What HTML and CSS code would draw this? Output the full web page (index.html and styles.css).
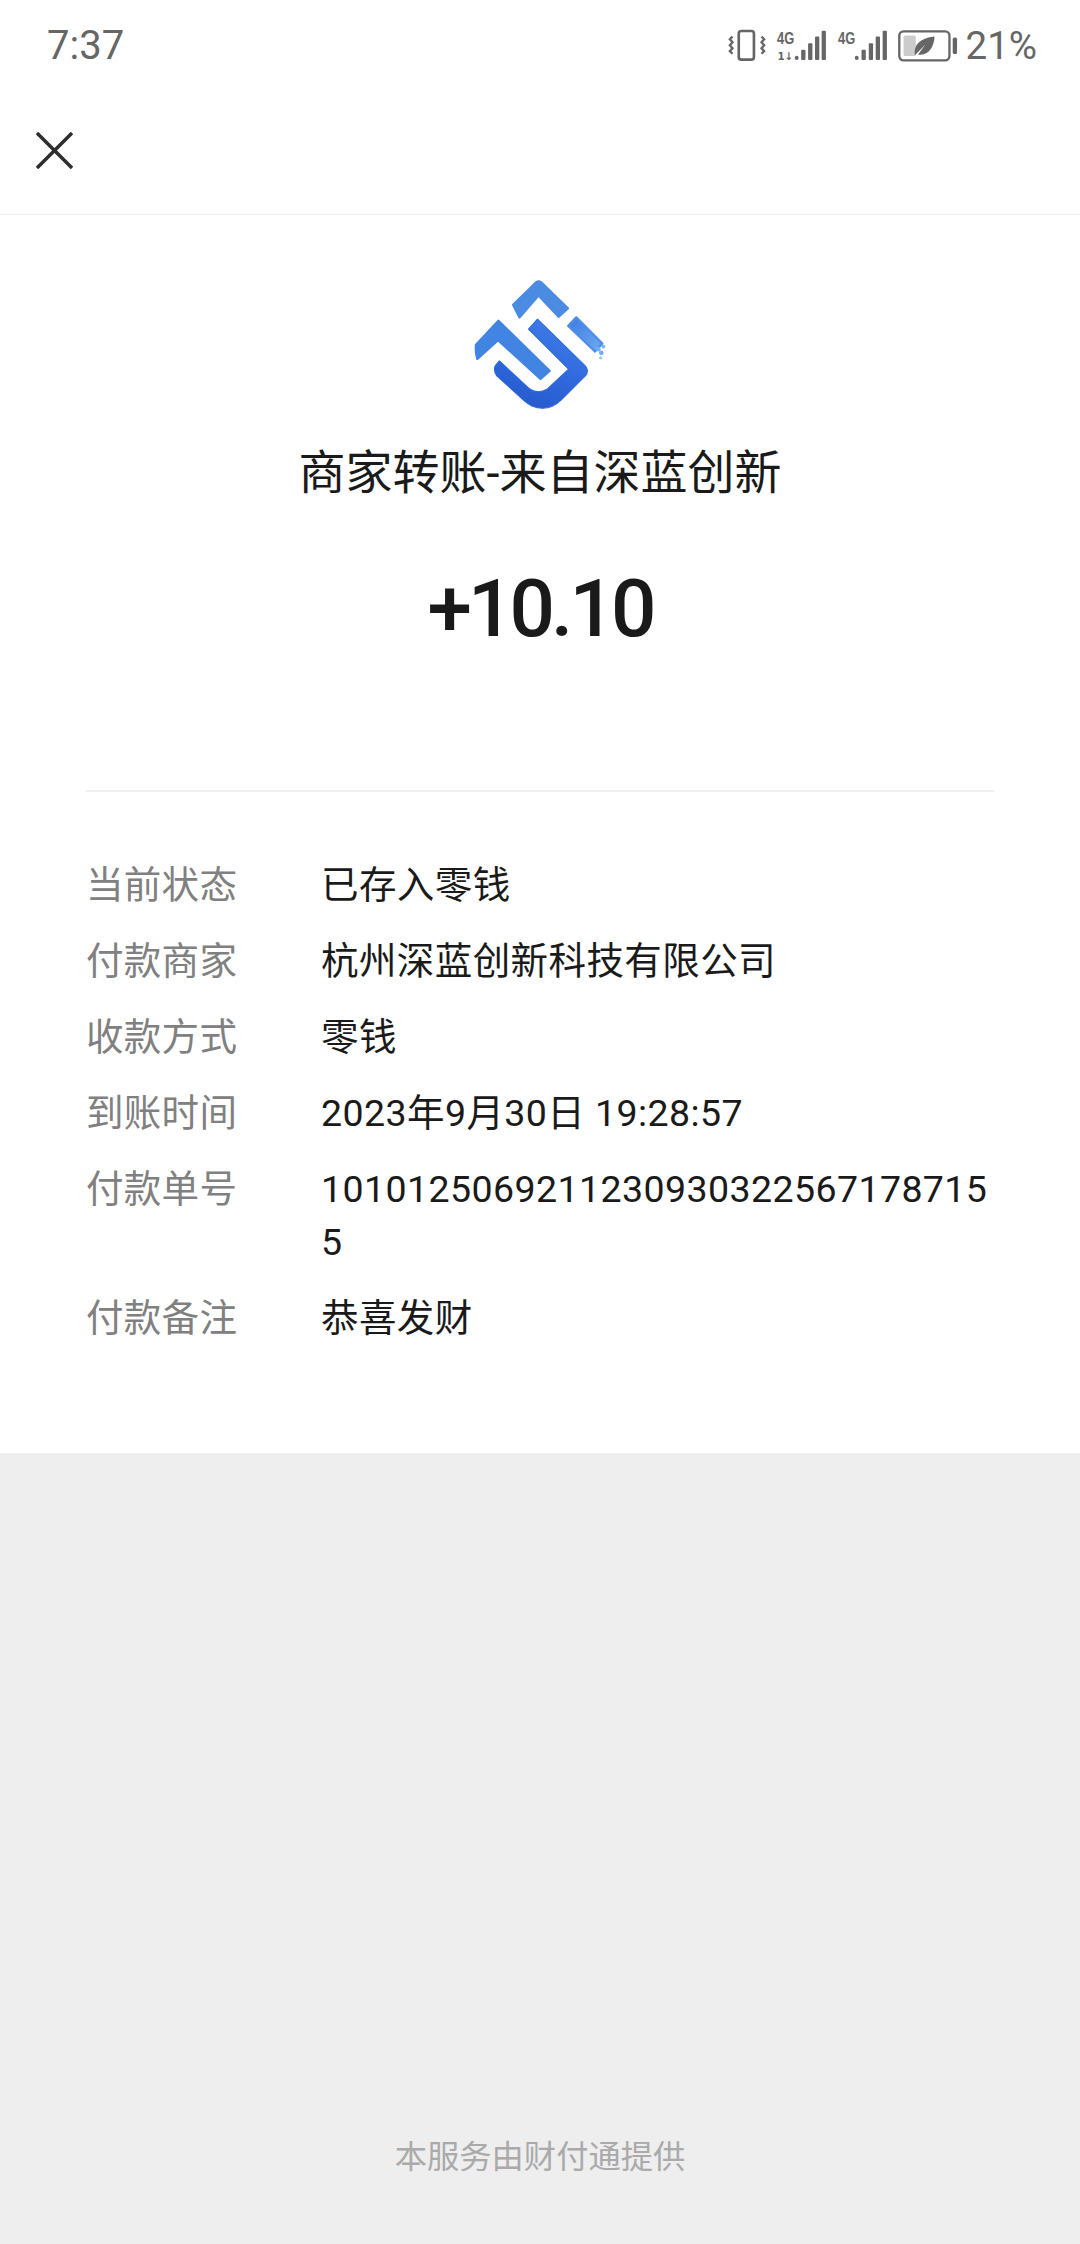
FILE: index.html
```html
<!DOCTYPE html>
<html lang="zh-CN">
<head>
    <meta charset="UTF-8">
    <title>商家转账</title>
    <link rel="stylesheet" href="styles.css">
</head>
<body>
<div class="status-bar">
    <span class="clock">7:37</span>
    <div class="status-icons">
        <svg class="ic-vibrate" viewBox="85 75 115 100" width="39" height="33">
            <rect x="116" y="81" width="46" height="87" rx="8" fill="none" stroke="#666" stroke-width="8"/>
            <path d="M97 98l-8 8 8 9-8 9 8 9-8 9 8 8M185 98l8 8-8 9 8 9-8 9 8 9-8 8" fill="none" stroke="#666" stroke-width="7"/>
        </svg>
        <svg class="ic-signal" viewBox="228 75 155 100" width="52" height="33">
            <text x="230" y="119" class="net" textLength="52" lengthAdjust="spacingAndGlyphs">4G</text>
            <text x="231" y="170" class="net-sub" textLength="48" lengthAdjust="spacingAndGlyphs">1↓</text>
            <rect x="284" y="156" width="11" height="13" rx="5" fill="#666"/>
            <rect x="303" y="138" width="13" height="31" rx="3" fill="#666"/>
            <rect x="324" y="118" width="13" height="51" rx="3" fill="#666"/>
            <rect x="345" y="98" width="13" height="71" rx="3" fill="#666"/>
            <rect x="365" y="80" width="13" height="89" rx="3" fill="#666"/>
        </svg>
        <svg class="ic-signal2" viewBox="412 75 155 100" width="52" height="33">
            <text x="414" y="119" class="net" textLength="52" lengthAdjust="spacingAndGlyphs">4G</text>
            <rect x="465" y="156" width="11" height="13" rx="5" fill="#666"/>
            <rect x="485" y="138" width="13" height="31" rx="3" fill="#666"/>
            <rect x="507" y="118" width="13" height="51" rx="3" fill="#666"/>
            <rect x="528" y="98" width="13" height="71" rx="3" fill="#666"/>
            <rect x="549" y="80" width="13" height="89" rx="3" fill="#666"/>
        </svg>
        <svg class="ic-battery" viewBox="600 80 180 100" width="60" height="33">
            <rect x="603" y="87" width="152" height="88" rx="13" fill="none" stroke="#666" stroke-width="7"/>
            <rect x="616" y="100" width="37" height="62" rx="5" fill="#ccc"/>
            <path d="M650 158c-4-28 14-50 60-55-2 36-22 60-50 54l22-30-30 31z" fill="#666"/>
            <rect x="765" y="106" width="13" height="50" rx="5" fill="#666"/>
        </svg>
        <span class="battery-pct">21%</span>
    </div>
</div>

<div class="top-bar">
    <svg class="close" viewBox="0 0 38 38" width="37" height="37">
        <path d="M1 1l36 36M37 1L1 37" fill="none" stroke="#2e2e2e" stroke-width="3.6"/>
    </svg>
</div>

<div class="card">
    <svg class="logo" viewBox="72 55 395 395" width="132" height="132">
        <defs>
            <linearGradient id="logoU" x1="0.3" y1="1" x2="0.7" y2="0">
                <stop offset="0" stop-color="#2459cb"/>
                <stop offset="0.45" stop-color="#3069dd"/>
                <stop offset="1" stop-color="#3f7de6"/>
            </linearGradient>
            <linearGradient id="logoBar" x1="0" y1="0" x2="1" y2="1">
                <stop offset="0" stop-color="#3d7ae2"/>
                <stop offset="1" stop-color="#6eaaf0"/>
            </linearGradient>
        </defs>
        <path class="logo-arm" d="M189 132L258 65q8-5 15 0L353 143 325 168 265 104 208 170z" fill="#4b8ce2" stroke="#4b8ce2"/>
        <path class="logo-arm" d="M354 195l24-25 78 78-22 24z" fill="url(#logoBar)" stroke="#4f8ee6"/>
        <circle cx="444" cy="265" r="7" fill="#6fb0ee"/>
        <circle cx="459" cy="257" r="6" fill="#7db8f0"/>
        <circle cx="453" cy="276" r="7" fill="#6fb0ee"/>
        <circle cx="451" cy="291" r="5" fill="#9cc9f4"/>
        <path class="logo-arm" d="M78 252l67-72 153 150-27 24-127-116-62 56q-6-20-4-42z" fill="#4184e2" stroke="#4184e2"/>
        <path class="logo-u" d="M235 205l27-30 143 140q13 15 0 30l-70 70q-40 40-90 20-10-5-20-13l-85-77q-10-12-5-30l13-15 92 85q25 15 50 0l65-60z" fill="url(#logoU)" stroke="#3069dd"/>
    </svg>
    <h1 class="title">商家转账-来自深蓝创新</h1>
    <div class="amount">+10.10</div>
    <div class="rows">
        <div class="row"><span class="label">当前状态</span><span class="value">已存入零钱</span></div>
        <div class="row"><span class="label">付款商家</span><span class="value">杭州深蓝创新科技有限公司</span></div>
        <div class="row"><span class="label">收款方式</span><span class="value">零钱</span></div>
        <div class="row"><span class="label">到账时间</span><span class="value">2023年9月30日 19:28:57</span></div>
        <div class="row"><span class="label">付款单号</span><span class="value">10101250692112309303225671787155</span></div>
        <div class="row"><span class="label">付款备注</span><span class="value">恭喜发财</span></div>
    </div>
</div>

<div class="footer">
    <span class="footer-text">本服务由财付通提供</span>
</div>
</body>
</html>
```
FILE: styles.css
```css
html {
    height: 100%;
}
body {
    margin: 0;
    height: 2244px;
    display: flex;
    flex-direction: column;
    background: #eee;
    font-family: Roboto, "Noto Sans CJK SC", sans-serif;
    color: #1a1a1a;
    overflow: hidden;
}
.status-bar {
    height: 90px;
    display: flex;
    align-items: center;
    justify-content: space-between;
    padding: 0 43px 0 47px;
    background: #fff;
    color: #666;
}
.clock {
    font-size: 40px;
}
.status-icons {
    display: flex;
    align-items: center;
    gap: 9px;
}
.status-icons .net {
    font-family: "Liberation Sans", sans-serif;
    font-size: 48px;
    font-weight: 700;
    fill: #666;
}
.status-icons .net-sub {
    font-family: "DejaVu Sans", sans-serif;
    font-size: 32px;
    font-weight: 700;
    fill: #666;
}
.battery-pct {
    font-size: 38.5px;
    margin-left: -1px;
}
.logo-arm {
    stroke-width: 7;
    stroke-linejoin: round;
}
.logo-u {
    stroke-width: 3;
    stroke-linejoin: round;
}
.top-bar {
    height: 125px;
    display: flex;
    align-items: center;
    padding: 0 0 4px 36px;
    background: #fff;
    border-bottom: 1px solid #f1f1f1;
    box-sizing: border-box;
}
.card {
    background: #fff;
    height: 1238px;
    box-sizing: border-box;
    padding-top: 64px;
    display: flex;
    flex-direction: column;
    align-items: center;
}
.logo {
    display: block;
}
.title {
    margin: 32px 0 0;
    font-size: 47px;
    line-height: 60px;
    font-weight: 400;
    color: #1a1a1a;
}
.amount {
    margin-top: 60px;
    font-size: 80px;
    line-height: 92px;
    font-weight: 500;
    letter-spacing: -3.9px;
}
.rows {
    align-self: stretch;
    margin: 135px 86px 0 86px;
    padding-top: 67px;
    border-top: 2px solid #f0f0f0;
    display: flex;
    flex-direction: column;
    gap: 23px;
}
.row {
    display: flex;
    font-size: 37.5px;
    line-height: 53px;
}
.label {
    flex: 0 0 235px;
    color: #808080;
    letter-spacing: 0.3px;
}
.value {
    flex: 1;
    min-width: 0;
    word-break: break-all;
    letter-spacing: 0.42px;
    color: #1a1a1a;
}
.footer {
    flex: 1;
    display: flex;
    align-items: flex-end;
    justify-content: center;
    padding-bottom: 65px;
}
.footer-text {
    font-size: 32.3px;
    line-height: 44px;
    color: #aaa;
}
```
